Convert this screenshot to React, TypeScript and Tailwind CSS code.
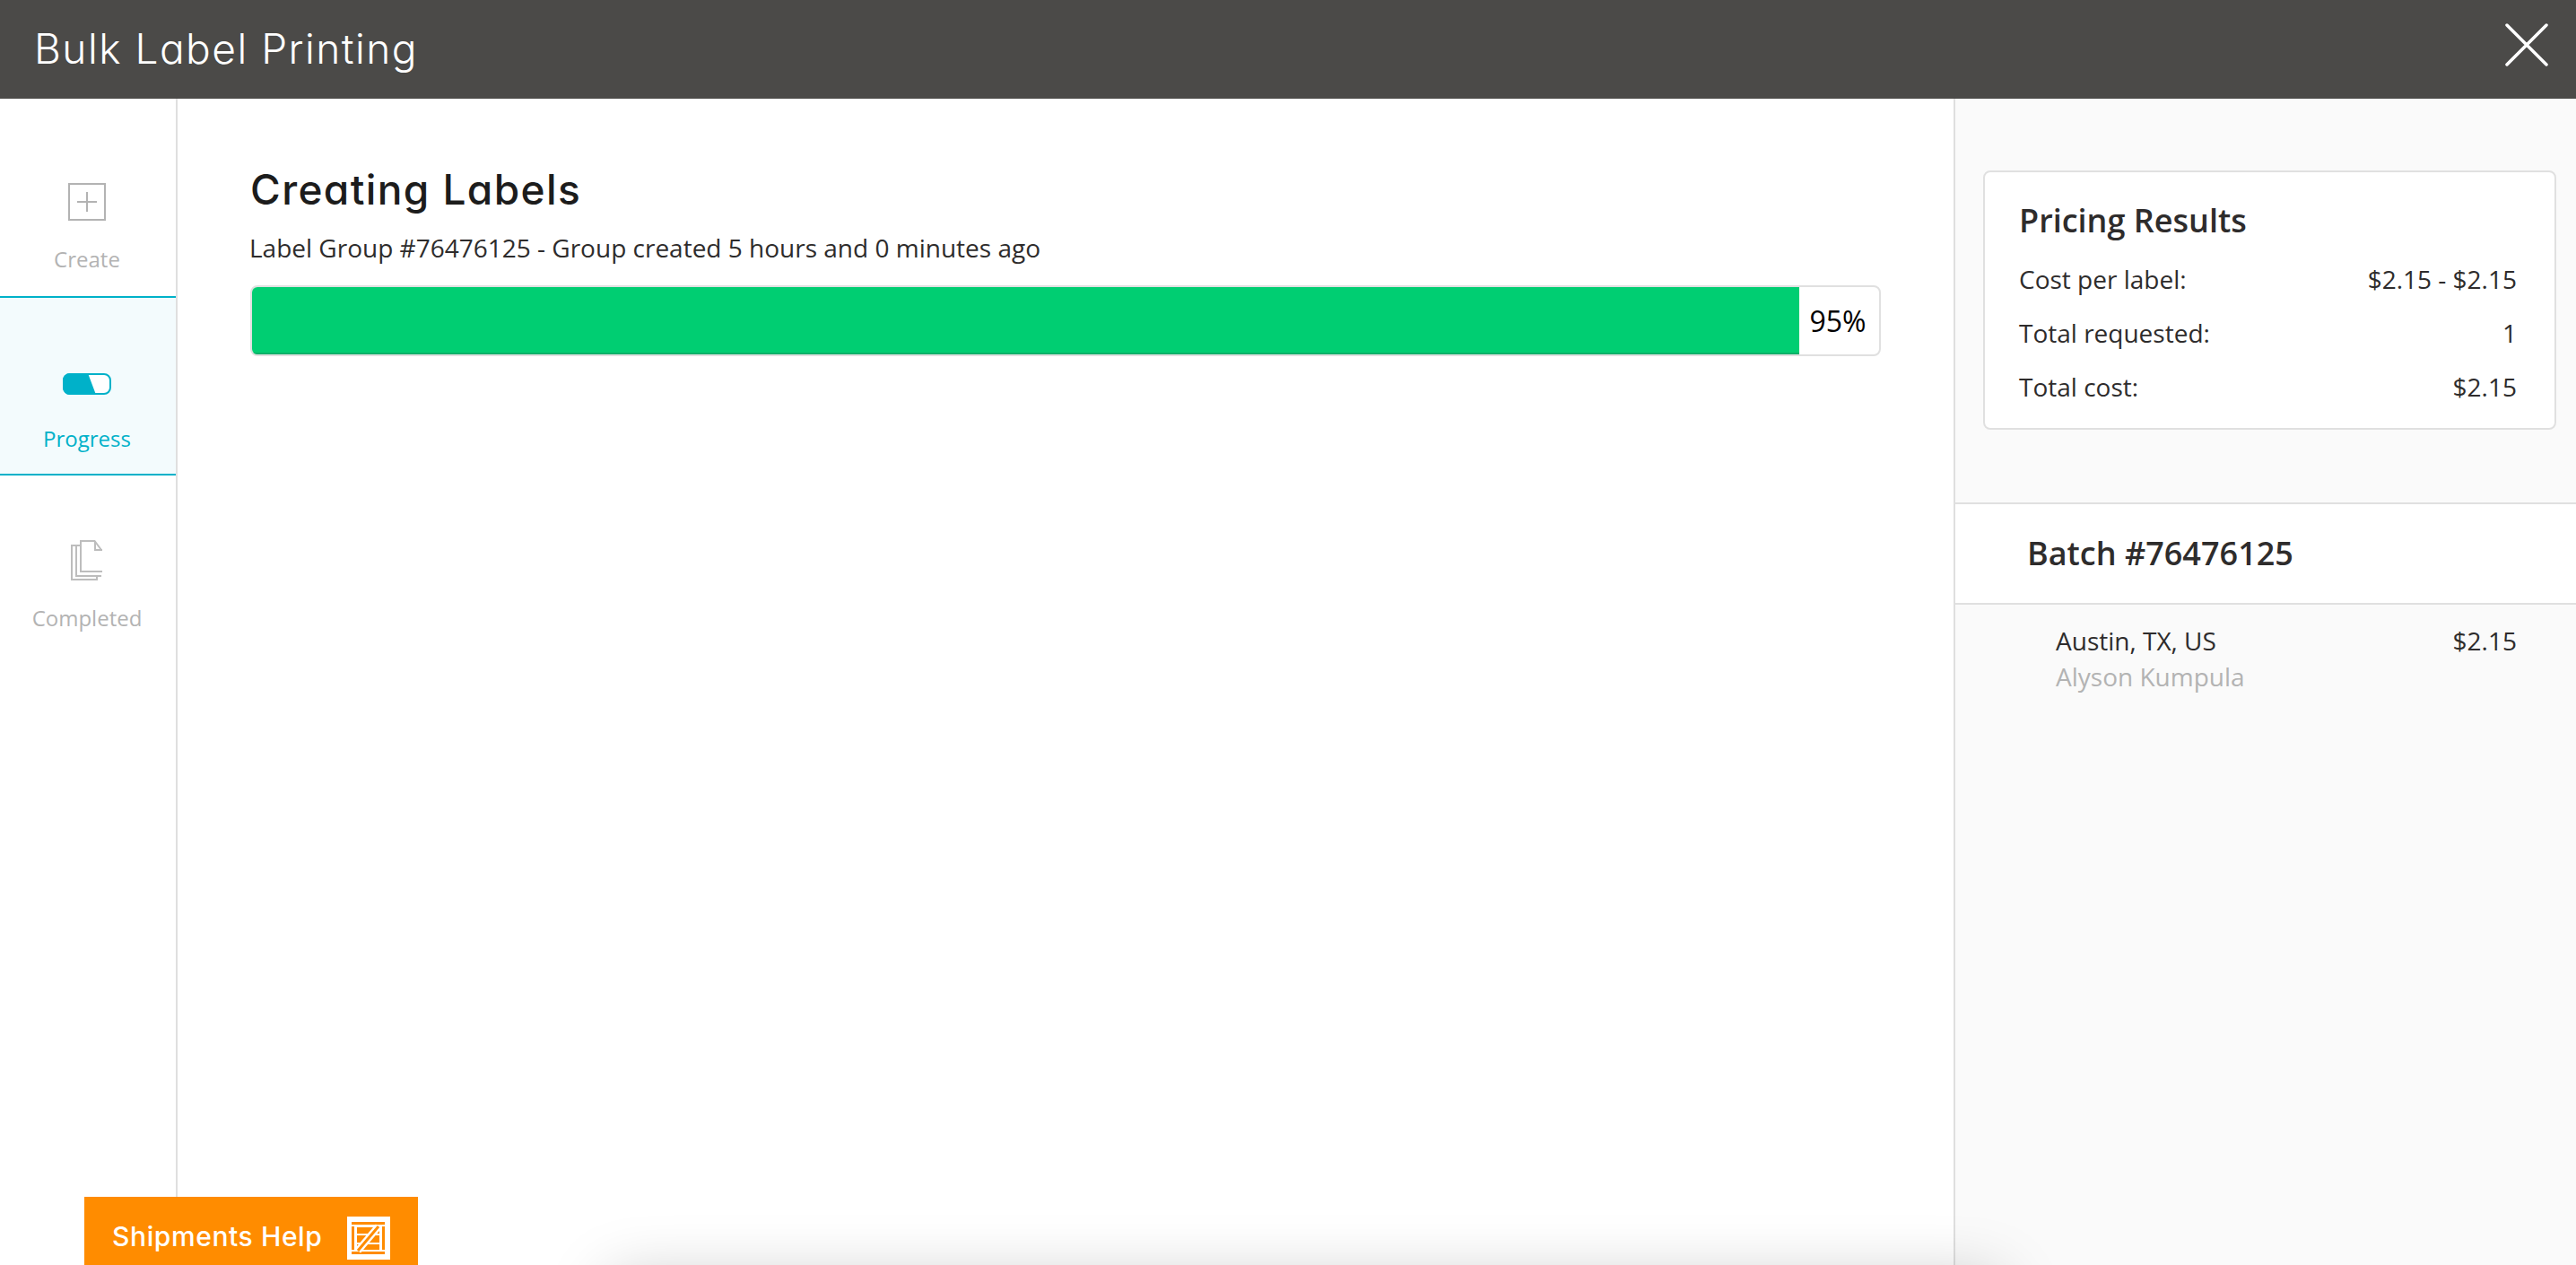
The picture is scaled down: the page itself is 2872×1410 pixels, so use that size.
const openSans = "font-['Open_Sans',sans-serif]";
const display = "font-['Inter',sans-serif] [font-feature-settings:'cv11','ss03']";

function CreateIcon() {
  return (
    <svg width="42" height="42" viewBox="0 0 42 42" fill="none" stroke="#b3b3b3">
      <rect x="1" y="1" width="40" height="40" strokeWidth="2" />
      <path d="M21 10v22M10 21h22" strokeWidth="2" />
    </svg>
  );
}

function ProgressIcon() {
  return (
    <svg width="54" height="24" viewBox="0 0 54 24" fill="none">
      <rect x="1" y="1" width="52" height="22" rx="7" fill="#fff" stroke="#00b1c9" strokeWidth="2" />
      <path d="M8 0h20l9 24H8a8 8 0 0 1-8-8V8a8 8 0 0 1 8-8z" fill="#00b1c9" />
    </svg>
  );
}

function CompletedIcon() {
  return (
    <svg width="36" height="46" viewBox="0 0 36 46" fill="none" stroke="#bdbdbd" strokeWidth="2">
      <path d="M11 6H1v38h28v-4" />
      <path d="M6 6v34h28" />
      <path d="M35 36H11V1h16l8 10v25z" fill="#fff" stroke="none" />
      <path d="M35 35H11V1h15.5L34 11" />
      <path d="M27 1v10h8" />
    </svg>
  );
}

function CrateIcon() {
  return (
    <svg width="48" height="48" viewBox="0 0 48 48" className="shrink-0">
      <rect width="48" height="48" fill="#fff" />
      <path d="M5 6h37v3H5zM5 39h37v3H5zM5 11h3v26H5zM39 11h3v26h-3z" fill="#ff8c00" />
      <rect x="11" y="12" width="25" height="25" fill="#ff8c00" />
      <path d="M11 20h25M11 30h25" stroke="#fff" strokeWidth="2" />
      <path d="M12 38 35 11" stroke="#fff" strokeWidth="8" />
      <path d="M12 38 35 11" stroke="#ff8c00" strokeWidth="3" />
    </svg>
  );
}

function PriceRow({ label, value }: { label: string; value: string }) {
  return (
    <div className="flex h-[60px] items-center justify-between">
      <span>{label}</span>
      <span>{value}</span>
    </div>
  );
}

export default function App() {
  return (
    <div className={`relative flex h-[1410px] w-[2872px] flex-col overflow-hidden bg-white text-[28px] text-[#2e2c2c] ${openSans}`}>
      <header className="flex h-[110px] shrink-0 items-center justify-between bg-[#4b4a48] pl-[38px] pr-[31px] text-white">
        <div className={`mb-[2px] text-[46px] font-light leading-none tracking-[1.5px] ${display}`}>Bulk Label Printing</div>
        <svg width="48" height="48" viewBox="0 0 48 48" fill="none" stroke="#fff" strokeWidth="3.5" strokeLinecap="round" className="mb-[11px]">
          <path d="M2 2l44 44M46 2 2 46" />
        </svg>
      </header>

      <div className="flex min-h-0 flex-1">
        <nav className="flex w-[198px] shrink-0 flex-col border-r-2 border-[#dfdfdf] text-[24px] leading-[36px] text-[#b3b3b3]">
          <div className="flex h-[222px] flex-col items-center border-b-2 border-[#00b1c9] pr-[2px] pt-[94px]">
            <CreateIcon />
            <span className="mt-[25px]">Create</span>
          </div>
          <div className="flex h-[198px] flex-col items-center border-b-2 border-[#00b1c9] bg-[#f3fbfd] pr-[2px] pt-[84px] text-[#00b1c9]">
            <ProgressIcon />
            <span className="mt-[31px]">Progress</span>
          </div>
          <div className="flex flex-col items-center pr-[2px] pt-[72px]">
            <CompletedIcon />
            <span className="mt-[23px]">Completed</span>
          </div>
        </nav>

        <main className="min-w-0 flex-1 px-[81px] pt-[73px]">
          <h1 className={`text-[46px] font-medium leading-[56px] tracking-[1.4px] text-[#1c1c1c] ${display}`}>Creating Labels</h1>
          <p className="-ml-[1px] mt-[17px] leading-[40px]">Label Group #76476125 - Group created 5 hours and 0 minutes ago</p>
          <div className="mt-[22px] flex h-[79px] items-stretch overflow-hidden rounded-[8px] border-2 border-[#e0e0e0] bg-white">
            <div className="w-[1725px] shrink-0 border-b-2 border-[#0fb068] bg-[#00ce72]" />
            <div className="flex flex-1 items-center justify-center pr-[3px] text-[32px] text-black">95%</div>
          </div>
        </main>

        <aside className="w-[694px] shrink-0 border-l-2 border-[#dfdfdf] bg-[#fafafa]">
          <div className="ml-[31px] mr-[22px] mt-[80px] h-[289px] rounded-[8px] border-2 border-[#e0e0e0] bg-white pl-[38px] pr-[42px] pt-[24px]">
            <h2 className="mb-[5px] text-[36px] font-semibold leading-[60px]">Pricing Results</h2>
            <PriceRow label="Cost per label:" value="$2.15 - $2.15" />
            <PriceRow label="Total requested:" value="1" />
            <PriceRow label="Total cost:" value="$2.15" />
          </div>
          <div className="mt-[81px] flex h-[114px] items-center border-y-2 border-[#e0e0e0] bg-white pl-[80px] text-[36px] font-semibold">
            Batch #76476125
          </div>
          <div className="flex justify-between pl-[112px] pr-[66px] pt-[20px] leading-[40px]">
            <div>
              <div>Austin, TX, US</div>
              <div className="text-[#b3b3b3]">Alyson Kumpula</div>
            </div>
            <div>$2.15</div>
          </div>
        </aside>
      </div>

      <div className="absolute left-[94px] top-[1334px] flex h-[76px] w-[372px] items-center gap-[28px] bg-[#ff8c00] pl-[31px] pt-[16px] text-white">
        <span className={`mb-[4px] whitespace-nowrap text-[30px] font-medium leading-[30px] tracking-[0.6px] ${display}`}>Shipments Help</span>
        <CrateIcon />
      </div>

      {/* shadow of the sheet sitting just below the fold */}
      <div className="absolute left-[680px] top-[1425px] h-[100px] w-[1550px] shadow-[0_0_70px_rgba(0,0,0,0.22)]" />
    </div>
  );
}
